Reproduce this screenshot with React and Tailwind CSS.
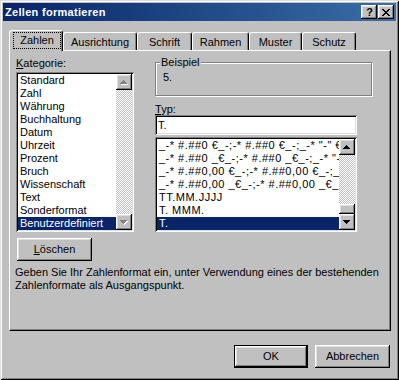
import React from 'react';

// Win classic 3D-Kanten
const raised = 'shadow-[inset_-1px_-1px_#000,inset_1px_1px_#fff,inset_-2px_-2px_#808080,inset_2px_2px_#dfdfdf]';
const sunken = 'shadow-[inset_1px_1px_#808080,inset_-1px_-1px_#fff,inset_2px_2px_#000,inset_-2px_-2px_#dfdfdf]';

const kategorien = [
  'Standard', 'Zahl', 'Währung', 'Buchhaltung', 'Datum', 'Uhrzeit',
  'Prozent', 'Bruch', 'Wissenschaft', 'Text', 'Sonderformat', 'Benutzerdefiniert',
];

const typen = [
  '_-* #.##0 €_-;-* #.##0 €_-;_-* "-" €_-;_-@_-',
  '_-* #.##0 _€_-;-* #.##0 _€_-;_-* "-" _€_-;_-@_-',
  '_-* #.##0,00 €_-;-* #.##0,00 €_-;_-* "-"?? €_-;_-@_-',
  '_-* #.##0,00 _€_-;-* #.##0,00 _€_-;_-* "-"?? _€_-;_-@_-',
  'TT.MM.JJJJ',
  'T. MMM.',
  'T.',
];

const tabs = [
  { name: 'Ausrichtung', w: 'w-[74px]' },
  { name: 'Schrift', w: 'w-[55px]' },
  { name: 'Rahmen', w: 'w-[57px]' },
  { name: 'Muster', w: 'w-[53px]' },
  { name: 'Schutz', w: 'w-[54px]' },
];

const Arrow = ({ up, disabled }) => {
  const d = up
    ? 'M3 0h1v1H3zM2 1h3v1H2zM1 2h5v1H1zM0 3h7v1H0z'
    : 'M0 0h7v1H0zM1 1h5v1H1zM2 2h3v1H2zM3 3h1v1H3z';
  return (
    <div className={`flex h-[16px] w-[16px] shrink-0 items-center justify-center bg-[#c0c0c0] ${raised}`}>
      <svg width="8" height="5" viewBox="0 0 8 5" shapeRendering="crispEdges">
        {disabled && <path d={d} fill="#fff" transform="translate(1,1)" />}
        <path d={d} fill={disabled ? '#808080' : '#000'} />
      </svg>
    </div>
  );
};

const ScrollBar = ({ disabled, thumb }) => (
  <div className="flex w-[16px] shrink-0 flex-col">
    <Arrow up disabled={disabled} />
    <div className="flex flex-1 flex-col justify-end bg-[repeating-conic-gradient(#c0c0c0_0_25%,#fff_0_50%)] bg-[length:2px_2px]">
      {thumb && <div className={`h-[10px] bg-[#c0c0c0] ${raised}`} />}
    </div>
    <Arrow disabled={disabled} />
  </div>
);

const Button = ({ children, className = '' }) => (
  <div className={`flex h-[23px] items-center justify-center bg-[#c0c0c0] ${raised} ${className}`}>
    {children}
  </div>
);

export default function App() {
  return (
    <div className="flex h-[380px] w-[399px] flex-col bg-[#c0c0c0] p-[3px] font-['Liberation_Sans',Arial,sans-serif] text-[11px] leading-[13px] text-black shadow-[inset_1px_1px_#dfdfdf,inset_-1px_-1px_#000,inset_2px_2px_#fff,inset_-2px_-2px_#808080]">
      {/* Titelleiste */}
      <div className="flex h-[18px] shrink-0 items-center bg-linear-to-r from-[#0a246a] to-[#3a6ea5] pl-[2px] pr-[2px]">
        <span className="font-bold tracking-[0.3px] text-white">Zellen formatieren</span>
        <div className="ml-auto flex gap-[1px]">
          <div className={`flex h-[14px] w-[16px] items-center justify-center bg-[#c0c0c0] pl-[1px] text-[11px] font-bold leading-none ${raised}`}>?</div>
          <div className={`flex h-[14px] w-[16px] items-center justify-center bg-[#c0c0c0] ${raised}`}>
            <svg width="8" height="7" viewBox="0 0 8 7" shapeRendering="crispEdges">
              <path d="M0 0h2v1H0zM1 1h2v1H1zM2 2h4v1H2zM3 3h2v1H3zM2 4h4v1H2zM1 5h2v1H1zM0 6h2v1H0zM6 0h2v1H6zM5 1h2v1H5zM5 5h2v1H5zM6 6h2v1H6z" fill="#000" />
            </svg>
          </div>
        </div>
      </div>

      <div className="flex flex-col pl-[6px] pr-[5px] pt-[9px]">
        {/* Registerkarten */}
        <div className="flex h-[20px] items-end">
          <div className="relative z-10 -mb-px flex h-[21px] w-[54px] rounded-t-[3px] border-l border-t border-r border-white border-r-black bg-[#c0c0c0] pb-[2px] pl-[3px] pr-[1px] pt-[1px] shadow-[inset_-1px_0_#808080]">
            <div className="flex h-[17px] flex-1 items-center justify-center border border-dotted border-black">Zahlen</div>
          </div>
          {tabs.map((t) => (
            <div
              key={t.name}
              className={`flex h-[18px] ${t.w} items-start justify-center rounded-t-[3px] border-l border-t border-r border-white border-r-black pt-[3px] shadow-[inset_-1px_0_#808080]`}
            >
              {t.name}
            </div>
          ))}
        </div>

        {/* Panel */}
        <div className="flex h-[281px] flex-col border border-white border-b-black border-r-black shadow-[inset_-1px_-1px_#808080]">
          <div className="flex pl-[6px]">
            {/* Kategorie */}
            <div className="flex w-[118px] flex-col pt-[6px]">
              <div>
                <span className="underline">K</span>ategorie:
              </div>
              <div className={`mt-[2px] flex h-[160px] bg-white p-[2px] ${sunken}`}>
                <div className="flex flex-1 flex-col">
                  {kategorien.map((k, i) => (
                    <div
                      key={k}
                      className={`h-[13px] whitespace-nowrap pl-[2px] ${i === kategorien.length - 1 ? 'bg-[#0a246a] text-white' : ''}`}
                    >
                      {k}
                    </div>
                  ))}
                </div>
                <ScrollBar disabled />
              </div>
            </div>

            {/* rechte Spalte */}
            <div className="ml-[21px] flex w-[217px] flex-col pt-[11px]">
              <div className="relative h-[34px] border border-[#808080] shadow-[inset_1px_1px_#fff,1px_1px_#fff] pl-[7px] pt-[8px]">
                <span className="absolute left-[4px] top-[-7px] bg-[#c0c0c0] px-[1px]">Beispiel</span>
                <div>5.</div>
              </div>
              <div className="mt-[7px] h-[12px]">
                <span className="underline">T</span>yp:
              </div>
              <div className={`flex h-[20px] w-[202px] items-center bg-white pl-[3px] ${sunken}`}>T.</div>
              <div className={`mt-[2px] flex h-[95px] w-[202px] bg-white p-[2px] ${sunken}`}>
                <div className="flex min-w-0 flex-1 flex-col overflow-hidden">
                  {typen.map((t, i) => (
                    <div
                      key={t}
                      className={`h-[13px] whitespace-pre pl-[2px] tracking-[0.5px] ${i === typen.length - 1 ? 'bg-[#0a246a] text-white' : ''}`}
                    >
                      {t}
                    </div>
                  ))}
                </div>
                <ScrollBar thumb />
              </div>
            </div>
          </div>

          <Button className="ml-[7px] mt-[6px] h-[22px] w-[75px]">
            <span>
              <span className="underline">L</span>öschen
            </span>
          </Button>

          <p className="ml-[5px] mt-[5px]">
            Geben Sie Ihr Zahlenformat ein, unter Verwendung eines der bestehenden
            <br />
            Zahlenformate als Ausgangspunkt.
          </p>
        </div>

        {/* Dialogschaltflächen */}
        <div className="mr-[1px] mt-[14px] flex justify-end gap-[7px]">
          <Button className="w-[74px] border border-black">OK</Button>
          <Button className="w-[75px]">Abbrechen</Button>
        </div>
      </div>
    </div>
  );
}
